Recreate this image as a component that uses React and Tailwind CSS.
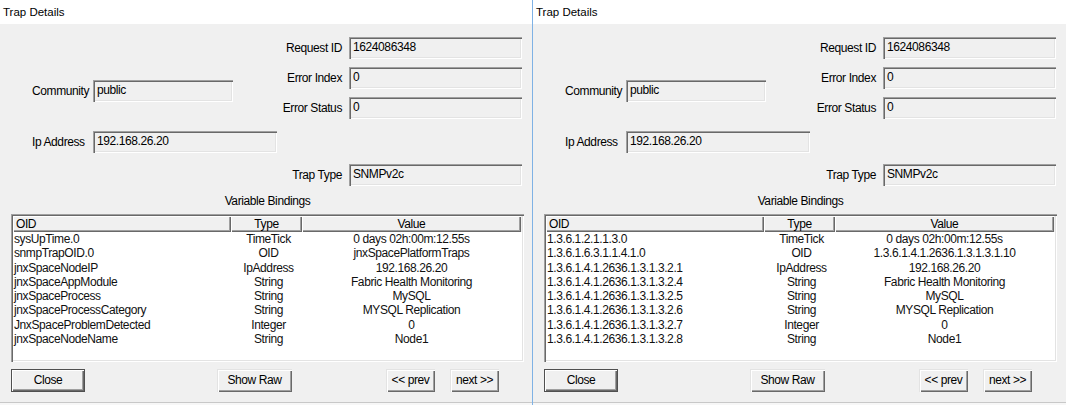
import React from 'react';

// --- data for both dialogs ---
const namedRows = [
  ['sysUpTime.0', 'TimeTick', '0 days 02h:00m:12.55s'],
  ['snmpTrapOID.0', 'OID', 'jnxSpacePlatformTraps'],
  ['jnxSpaceNodeIP', 'IpAddress', '192.168.26.20'],
  ['jnxSpaceAppModule', 'String', 'Fabric Health Monitoring'],
  ['jnxSpaceProcess', 'String', 'MySQL'],
  ['jnxSpaceProcessCategory', 'String', 'MYSQL Replication'],
  ['JnxSpaceProblemDetected', 'Integer', '0'],
  ['jnxSpaceNodeName', 'String', 'Node1'],
];

const numericRows = [
  ['1.3.6.1.2.1.1.3.0', 'TimeTick', '0 days 02h:00m:12.55s'],
  ['1.3.6.1.6.3.1.1.4.1.0', 'OID', '1.3.6.1.4.1.2636.1.3.1.3.1.10'],
  ['1.3.6.1.4.1.2636.1.3.1.3.2.1', 'IpAddress', '192.168.26.20'],
  ['1.3.6.1.4.1.2636.1.3.1.3.2.4', 'String', 'Fabric Health Monitoring'],
  ['1.3.6.1.4.1.2636.1.3.1.3.2.5', 'String', 'MySQL'],
  ['1.3.6.1.4.1.2636.1.3.1.3.2.6', 'String', 'MYSQL Replication'],
  ['1.3.6.1.4.1.2636.1.3.1.3.2.7', 'Integer', '0'],
  ['1.3.6.1.4.1.2636.1.3.1.3.2.8', 'String', 'Node1'],
];

// sunken read-only edit box
const Box = ({ value, width }) => (
  <div className={`${width} h-[22px] bg-[#f0f0f0] pl-[4px] pt-[3px] leading-[14px] text-black shadow-[inset_1px_1px_0_#a0a0a0,inset_2px_2px_0_#696969,inset_-1px_-1px_0_#ffffff,inset_-2px_-2px_0_#e3e3e3]`}>
    {value}
  </div>
);

const RightField = ({ label, value, className = '' }) => (
  <div className={`flex items-center gap-[7px] ${className}`}>
    <span>{label}</span>
    <Box value={value} width="w-[173px]" />
  </div>
);

const HeadCell = ({ children, width, align = 'text-center' }) => (
  <div className={`${width} h-full ${align} px-[3px] leading-[16px] shadow-[inset_1px_1px_0_#ffffff,inset_-1px_-1px_0_#696969,inset_-2px_-2px_0_#a0a0a0]`}>
    {children}
  </div>
);

const Btn = ({ children, width, isDefault }) => (
  <button
    className={`${width} h-[23px] bg-[#f0f0f0] text-black leading-[21px] ${
      isDefault
        ? 'border border-[#505050] shadow-[inset_1px_1px_0_#ffffff,inset_-1px_-1px_0_#696969,inset_-2px_-2px_0_#a0a0a0]'
        : 'shadow-[inset_1px_1px_0_#e3e3e3,inset_2px_2px_0_#ffffff,inset_-1px_-1px_0_#696969,inset_-2px_-2px_0_#a0a0a0]'
    }`}
  >
    {children}
  </button>
);

const TrapWindow = ({ rows, className = '' }) => (
  <div className={`flex flex-col bg-[#f0f0f0] ${className}`}>
    {/* title */}
    <div className="h-[24px] bg-white pl-[3px] leading-[25px] text-[11.5px] tracking-normal text-black">Trap Details</div>

    {/* header fields */}
    <div className="flex h-[162px]">
      <div className="flex flex-col pl-[32px] pt-[56px]">
        <div className="flex items-center">
          <span className="w-[61px]">Community</span>
          <Box value="public" width="w-[140px]" />
        </div>
        <div className="flex items-center mt-[29px]">
          <span className="w-[61px]">Ip Address</span>
          <Box value="192.168.26.20" width="w-[184px]" />
        </div>
      </div>
      <div className="flex flex-1 flex-col items-end pr-[10px] pt-[13px]">
        <RightField label="Request ID" value="1624086348" />
        <RightField label="Error Index" value="0" className="mt-[8px]" />
        <RightField label="Error Status" value="0" className="mt-[8px]" />
        <RightField label="Trap Type" value="SNMPv2c" className="mt-[45px]" />
      </div>
    </div>

    <div className="mt-[8px] h-[14px] w-[513px] ml-[11px] text-center leading-[14px]">Variable Bindings</div>

    {/* list view */}
    <div className="ml-[11px] mt-[6px] h-[148px] w-[513px] p-[2px] shadow-[inset_1px_1px_0_#a0a0a0,inset_2px_2px_0_#696969,inset_-1px_-1px_0_#ffffff,inset_-2px_-2px_0_#e3e3e3]">
      <div className="flex h-[16px] bg-[#f0f0f0]">
        <HeadCell width="w-[218px]" align="text-left">OID</HeadCell>
        <HeadCell width="w-[71px]">Type</HeadCell>
        <HeadCell width="w-[219px]">Value</HeadCell>
      </div>
      <div className="h-[128px] bg-white text-[#101010]">
        {rows.map(([oid, type, value]) => (
          <div key={oid} className="flex h-[14.3px] leading-[14.3px] whitespace-nowrap">
            <div className="w-[218px] pl-[1px] overflow-hidden">{oid}</div>
            <div className="w-[71px] text-center pl-[4px]">{type}</div>
            <div className="w-[219px] text-center">{value}</div>
          </div>
        ))}
      </div>
    </div>

    {/* buttons */}
    <div className="flex mt-[7px] ml-[11px]">
      <Btn width="w-[74px]" isDefault>Close</Btn>
      <div className="ml-[132px]"><Btn width="w-[75px]">Show Raw</Btn></div>
      <div className="ml-[94px]"><Btn width="w-[49px]">&lt;&lt; prev</Btn></div>
      <div className="ml-[15px]"><Btn width="w-[49px]">next &gt;&gt;</Btn></div>
    </div>

    <div className="mt-auto h-[3px] border-t border-[#c8c8c8] bg-[#f7f7f7]" />
  </div>
);

export default function App() {
  return (
    <div className="flex h-[405px] w-[1066px] overflow-hidden bg-[#f0f0f0] text-[12px] tracking-[-0.4px] text-black" style={{ fontFamily: '"Liberation Sans", Arial, sans-serif' }}>
      <TrapWindow rows={namedRows} className="w-[532px]" />
      <div className="w-[1px] bg-[#7fb2e5]" />
      <TrapWindow rows={numericRows} className="flex-1" />
    </div>
  );
}
